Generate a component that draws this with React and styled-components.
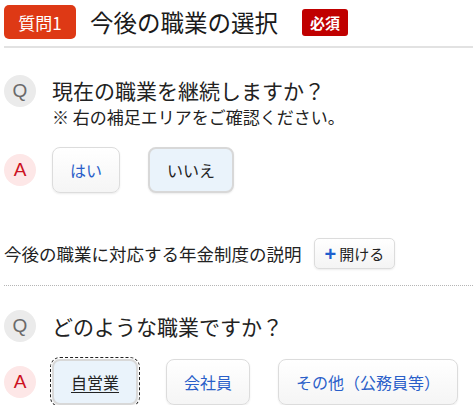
import styled, { createGlobalStyle } from "styled-components";

const GlobalStyle = createGlobalStyle`
    body {
        margin: 0;
        background: #fff;
        font-family: "Noto Sans CJK JP", "Noto Sans", sans-serif;
        color: #222;
    }
`

const Page = styled.div`
    padding-left: 4px;
    width: 469px;
`

const Header = styled.div`
    display: flex;
    align-items: center;
    padding-top: 5px;
    padding-bottom: 7px;
    border-bottom: 2px solid #e2e2e2;
`

const QBadge = styled.span`
    display: flex;
    align-items: center;
    justify-content: center;
    width: 72px;
    height: 34px;
    border-radius: 5px;
    background: #de3915;
    color: #fff;
    font-size: 17px;
    box-sizing: border-box;
`

const Title = styled.h2`
    margin: 0 24px 0 14px;
    font-size: 23.5px;
    font-weight: 400;
    line-height: 34px;
    color: #1a1a1a;
`

const Required = styled.span`
    display: flex;
    align-items: center;
    justify-content: center;
    width: 46px;
    height: 27px;
    border-radius: 3px;
    background: #c00000;
    color: #fff;
    font-size: 15px;
    font-weight: 700;
`

const Block = styled.div`
    display: flex;
    align-items: ${({ $top }) => ($top ? "flex-start" : "center")};
    gap: 16px;
    margin-top: ${({ $mt }) => $mt}px;
`

const Mark = styled.span`
    flex: none;
    display: flex;
    align-items: center;
    justify-content: center;
    width: 32px;
    height: 32px;
    border-radius: 50%;
    font-size: 19px;
    background: ${({ $answer }) => ($answer ? "#fde7e7" : "#ebebeb")};
    color: ${({ $answer }) => ($answer ? "#cc1122" : "#6a6a6a")};
    font-family: "Liberation Sans", sans-serif;
`

const Question = styled.div`
    p {
        margin: 0;
        font-size: 21px;
        line-height: 30px;
        color: #222;
    }
    small {
        display: block;
        font-size: 17px;
        line-height: 24px;
        color: #222;
    }
`

const Choices = styled.div`
    display: flex;
    gap: 28px;
`

const Choice = styled.button`
    height: 46px;
    padding: 0 17px;
    border-radius: 8px;
    font-family: inherit;
    font-size: 16px;
    cursor: pointer;
    border: ${({ $selected }) => ($selected ? "2px solid #d8d8d8" : "1px solid #dcdcdc")};
    background: ${({ $selected }) =>
        $selected ? "#eaf3fb" : "linear-gradient(#ffffff, #f5f5f5)"};
    color: ${({ $selected }) => ($selected ? "#222" : "#2a5fc9")};
    box-shadow: 0 1px 2px rgba(0, 0, 0, 0.08);
    ${({ $focused }) =>
        $focused &&
        `
        outline: 1px dashed #222;
        outline-offset: 1px;
        text-decoration: underline;
        text-underline-offset: 3px;
    `}
`

const InfoRow = styled.div`
    display: flex;
    align-items: center;
    gap: 12px;
    margin-top: 45px;
    padding-bottom: 16px;
    border-bottom: 1px dotted #b5b5b5;
    font-size: 17.5px;
    color: #222;
`

const OpenButton = styled.button`
    display: flex;
    align-items: center;
    gap: 3px;
    height: 31px;
    padding: 0 10px;
    border-radius: 5px;
    border: 1px solid #dcdcdc;
    background: linear-gradient(#ffffff, #f4f4f4);
    font-family: inherit;
    font-size: 15px;
    color: #222;
    box-shadow: 0 1px 2px rgba(0, 0, 0, 0.08);

    b {
        color: #1e5fce;
        font-size: 20px;
        font-weight: 700;
        line-height: 1;
        font-family: "Liberation Sans", sans-serif;
    }
`

const App = () => {
    return (
        <Page>
            <GlobalStyle />
            <Header>
                <QBadge>質問1</QBadge>
                <Title>今後の職業の選択</Title>
                <Required>必須</Required>
            </Header>

            <Block $top $mt={27}>
                <Mark>Q</Mark>
                <Question>
                    <p>現在の職業を継続しますか？</p>
                    <small>※ 右の補足エリアをご確認ください。</small>
                </Question>
            </Block>

            <Block $mt={18}>
                <Mark $answer>A</Mark>
                <Choices>
                    <Choice>はい</Choice>
                    <Choice $selected>いいえ</Choice>
                </Choices>
            </Block>

            <InfoRow>
                今後の職業に対応する年金制度の説明
                <OpenButton><b>+</b>開ける</OpenButton>
            </InfoRow>

            <Block $mt={24}>
                <Mark>Q</Mark>
                <Question>
                    <p>どのような職業ですか？</p>
                </Question>
            </Block>

            <Block $mt={17}>
                <Mark $answer>A</Mark>
                <Choices>
                    <Choice $selected $focused>自営業</Choice>
                    <Choice>会社員</Choice>
                    <Choice>その他（公務員等）</Choice>
                </Choices>
            </Block>
        </Page>
    )
}

export default App
